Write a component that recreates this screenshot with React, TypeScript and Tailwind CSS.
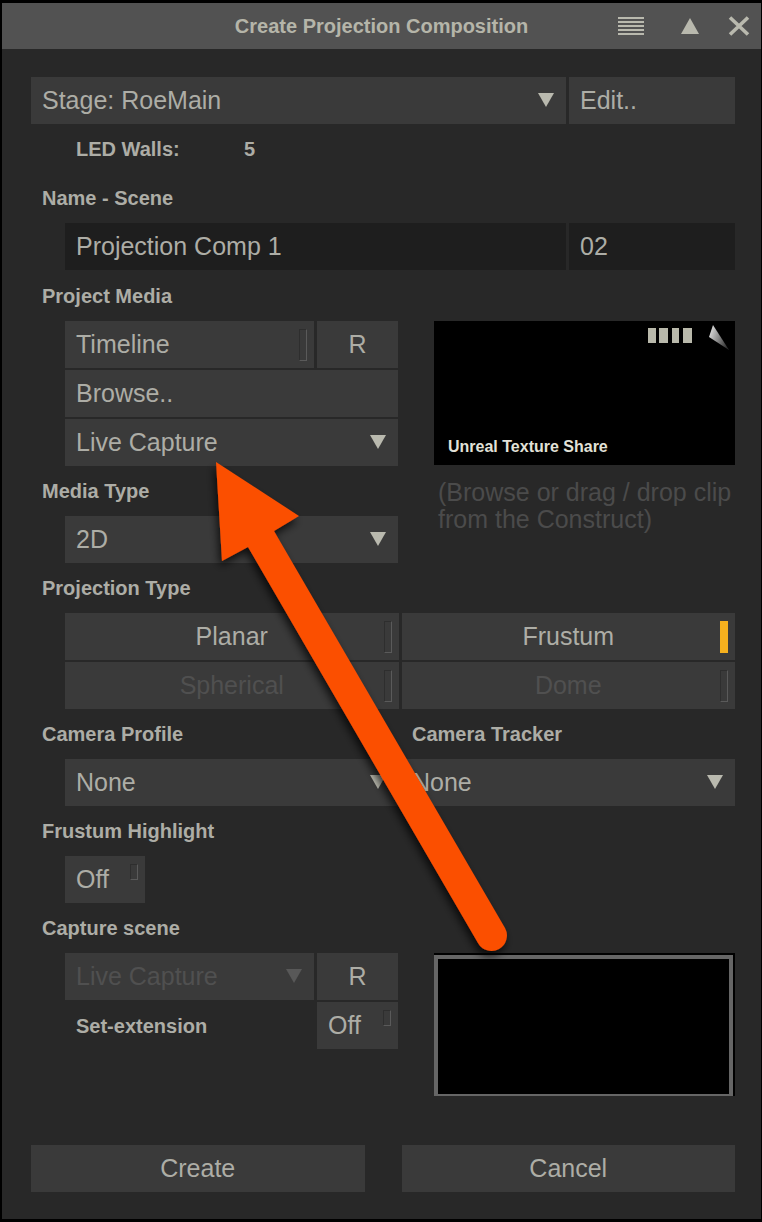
import React, { ReactNode } from "react";

const control =
  "h-[47px] w-full bg-[#3a3a3a] text-[25px] leading-[47px] text-[#adada6]";

function Label({ children, htmlFor }: { children: ReactNode; htmlFor?: string }) {
  return (
    <label
      htmlFor={htmlFor}
      className="flex h-[50px] items-center pl-[11px] text-[20px] font-bold text-[#adada6]"
    >
      {children}
    </label>
  );
}

function Indicator({ on = false, small = false }: { on?: boolean; small?: boolean }) {
  const size = small ? "h-4" : "h-8";
  const look = on
    ? "bg-[#f5b01e]"
    : "border border-t-[#2e2e2e] border-l-[#2e2e2e] border-r-[#5a5a5a] border-b-[#5a5a5a]";
  return <span aria-hidden="true" className={`absolute top-2 right-[7px] w-2 ${size} ${look}`} />;
}

function Toggle({
  children,
  on = false,
  small = false,
  center = false,
  disabled = false,
  labelledBy,
}: {
  children: ReactNode;
  on?: boolean;
  small?: boolean;
  center?: boolean;
  disabled?: boolean;
  labelledBy?: string;
}) {
  return (
    <button
      type="button"
      aria-pressed={on}
      aria-describedby={labelledBy}
      disabled={disabled}
      className={`relative ${control} ${center ? "text-center" : "pl-[11px] text-left"} disabled:text-[#505050]`}
    >
      {children}
      <Indicator on={on} small={small} />
    </button>
  );
}

function Button({ children, left = false }: { children: ReactNode; left?: boolean }) {
  return (
    <button type="button" className={`${control} ${left ? "pl-[11px] text-left" : "text-center"}`}>
      {children}
    </button>
  );
}

function Select({
  id,
  label,
  value,
  disabled = false,
}: {
  id: string;
  label?: string;
  value: string;
  disabled?: boolean;
}) {
  return (
    <div className="relative w-full">
      <select
        id={id}
        aria-label={label}
        disabled={disabled}
        className={`${control} block appearance-none rounded-none pr-10 pl-[11px] disabled:text-[#505050] disabled:opacity-100`}
      >
        <option>{value}</option>
      </select>
      <svg
        aria-hidden="true"
        viewBox="0 0 16 14"
        className={`pointer-events-none absolute top-4 right-3 h-[14px] w-4 ${disabled ? "fill-[#585858]" : "fill-[#b9b9ae]"}`}
      >
        <path d="M0 0H16L8 14Z" />
      </svg>
    </div>
  );
}

function Header() {
  return (
    <header className="relative flex h-[46px] items-center justify-center bg-[#525252]">
      <h1 className="text-[20px] font-bold text-[#b5b5a9]">Create Projection Composition</h1>
      <div className="absolute inset-y-0 right-3 flex items-center text-[#b9b9ae]">
        <button type="button" aria-label="Menu" className="mr-[37px]">
          <svg viewBox="0 0 26 18" className="h-[18px] w-[26px] fill-current">
            <path d="M0 0H26V2H0ZM0 4H26V6H0ZM0 8H26V10H0ZM0 12H26V14H0ZM0 16H26V18H0Z" />
          </svg>
        </button>
        <button type="button" aria-label="Collapse" className="mr-[30px]">
          <svg viewBox="0 0 18 16" className="h-4 w-[18px] fill-current">
            <path d="M9 0L18 16H0Z" />
          </svg>
        </button>
        <button type="button" aria-label="Close">
          <svg viewBox="0 0 20 18" className="h-[18px] w-5 overflow-visible">
            <path
              d="M1 0.5L19 17.5M19 0.5L1 17.5"
              fill="none"
              stroke="currentColor"
              strokeWidth="3.6"
            />
          </svg>
        </button>
      </div>
    </header>
  );
}

function MediaPreview() {
  return (
    <figure>
      <div className="flex h-[144px] flex-col justify-between bg-black">
        <svg viewBox="0 0 90 34" aria-hidden="true" className="h-[34px] w-[90px] self-end">
          <defs>
            <linearGradient
              id="shine"
              gradientUnits="userSpaceOnUse"
              x1="64"
              y1="15"
              x2="84"
              y2="22"
            >
              <stop offset="0" stopColor="#d4d4d4" />
              <stop offset="0.45" stopColor="#8a8a8a" />
              <stop offset="1" stopColor="#2a2a2a" />
            </linearGradient>
          </defs>
          <path fill="#b9b9ab" d="M3 7H11V22H3ZM14 7H23V22H14ZM27 7H34V22H27ZM38 7H47V22H38Z" />
          <path fill="url(#shine)" d="M68 4L84 29L64 16Z" />
        </svg>
        <p className="px-3.5 pb-1 text-[16px] leading-7 font-bold text-[#e2e2d8]">
          Unreal Texture Share
        </p>
      </div>
      <figcaption className="mt-[14px] pl-1 text-[25px] leading-[27px] text-[#4b4b4b]">
        (Browse or drag / drop clip from the Construct)
      </figcaption>
    </figure>
  );
}

function Pointer() {
  return (
    <svg
      aria-hidden="true"
      viewBox="200 450 330 520"
      className="pointer-events-none absolute top-[450px] left-[200px] h-[520px] w-[330px]"
    >
      <defs>
        <filter id="shade" x="-10%" y="-10%" width="120%" height="120%">
          <feDropShadow dx="-2" dy="5" stdDeviation="4" floodColor="#000" floodOpacity="0.75" />
        </filter>
      </defs>
      <path
        fill="#fb4f04"
        filter="url(#shade)"
        d="M216 462L299 516L274 531L505 928A15 15 0 0 1 478 943L248 547L222 561Z"
      />
    </svg>
  );
}

export default function App() {
  return (
    <div className="relative min-h-screen bg-black pt-[3px] pr-px pb-0.5 pl-0.5 font-['Liberation_Sans',Arial,sans-serif]">
      <main className="bg-[#282828]">
        <Header />
        <form className="pt-7 pr-[26px] pb-[27px] pl-[29px]" onSubmit={(e) => e.preventDefault()}>
          <div className="flex gap-[3px]">
            <Select id="stage" label="Stage" value="Stage: RoeMain" />
            <div className="w-[166px] shrink-0">
              <Button left>Edit..</Button>
            </div>
          </div>

          <dl className="flex h-[49px] items-center pl-[45px] text-[20px] font-bold text-[#adada6]">
            <dt className="w-[168px]">LED Walls:</dt>
            <dd>5</dd>
          </dl>

          <Label htmlFor="name">Name - Scene</Label>
          <div className="flex gap-[3px] pl-[34px]">
            <input
              id="name"
              defaultValue="Projection Comp 1"
              className="h-[47px] w-full min-w-0 bg-[#1e1e1e] px-[11px] text-[25px] text-[#adada6]"
            />
            <input
              aria-label="Scene"
              defaultValue="02"
              className="h-[47px] w-[166px] shrink-0 bg-[#1e1e1e] px-[11px] text-[25px] text-[#adada6]"
            />
          </div>

          <div className="grid grid-cols-[367fr_334fr] gap-[3px] pt-px">
            <div>
              <Label>Project Media</Label>
              <div className="flex flex-col gap-0.5 pl-[34px]">
                <div className="flex gap-[3px]">
                  <Toggle>Timeline</Toggle>
                  <div className="w-[81px] shrink-0">
                    <Button>R</Button>
                  </div>
                </div>
                <Button left>Browse..</Button>
                <Select id="source" label="Media source" value="Live Capture" />
              </div>
              <Label htmlFor="media-type">Media Type</Label>
              <div className="pl-[34px]">
                <Select id="media-type" value="2D" />
              </div>
            </div>
            <div className="pt-[50px] pl-[33px]">
              <MediaPreview />
            </div>
          </div>

          <Label>Projection Type</Label>
          <div className="grid grid-cols-2 gap-x-[3px] gap-y-0.5 pl-[34px]">
            <Toggle center>Planar</Toggle>
            <Toggle center on>
              Frustum
            </Toggle>
            <Toggle center disabled>
              Spherical
            </Toggle>
            <Toggle center disabled>
              Dome
            </Toggle>
          </div>

          <div className="grid grid-cols-[367fr_334fr] gap-x-[3px]">
            <div>
              <Label htmlFor="profile">Camera Profile</Label>
              <div className="pl-[34px]">
                <Select id="profile" value="None" />
              </div>
            </div>
            <div>
              <Label htmlFor="tracker">Camera Tracker</Label>
              <Select id="tracker" value="None" />
            </div>
          </div>

          <Label>
            <span id="highlight">Frustum Highlight</span>
          </Label>
          <div className="w-[114px] pl-[34px]">
            <Toggle small labelledBy="highlight">
              Off
            </Toggle>
          </div>

          <div className="grid grid-cols-[367fr_334fr] gap-[3px]">
            <div>
              <Label htmlFor="capture">Capture scene</Label>
              <div className="flex gap-[3px] pl-[34px]">
                <Select id="capture" value="Live Capture" disabled />
                <div className="w-[81px] shrink-0">
                  <Button>R</Button>
                </div>
              </div>
              <div className="mt-0.5 flex items-center justify-between pl-[45px]">
                <span id="extension" className="text-[20px] font-bold text-[#adada6]">
                  Set-extension
                </span>
                <div className="w-[81px]">
                  <Toggle small labelledBy="extension">
                    Off
                  </Toggle>
                </div>
              </div>
            </div>
            <div className="pt-[50px] pl-[33px]">
              <div
                role="img"
                aria-label="Capture preview"
                className="h-[143px] border-t-2 border-r-2 border-black"
              >
                <div className="h-full border-4 border-b-2 border-[#666] bg-black" />
              </div>
            </div>
          </div>

          <div className="mt-[49px] grid grid-cols-2 gap-[37px]">
            <Button>Create</Button>
            <Button>Cancel</Button>
          </div>
        </form>
      </main>
      <Pointer />
    </div>
  );
}
